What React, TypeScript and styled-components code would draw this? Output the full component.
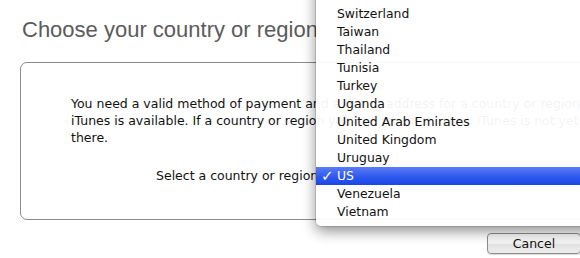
import React from "react";
import styled, { createGlobalStyle } from "styled-components";

const Global = createGlobalStyle`
  html, body { margin: 0; padding: 0; background: #fff; overflow: hidden; }
  body { width: 580px; height: 258px; }
`;

const Page = styled.div`
  position: relative;
  width: 700px;
  height: 258px;
  display: flex;
  flex-direction: column;
  padding: 0 0 0 20px;
  box-sizing: border-box;
  font-family: "DejaVu Sans", "Liberation Sans", sans-serif;
`;

const Title = styled.h1`
  margin: 0;
  height: 62px;
  display: flex;
  align-items: center;
  padding: 0 0 3px 2px;
  box-sizing: border-box;
  font-family: "Liberation Sans", Arial, sans-serif;
  font-weight: normal;
  font-size: 22px;
  color: #5b5b5b;
`;

const Box = styled.div`
  width: 660px;
  height: 158px;
  box-sizing: border-box;
  border: 1px solid #8a8a8a;
  border-radius: 7px;
  padding: 32px 0 0 50px;
  display: flex;
  flex-direction: column;
`;

const Message = styled.p`
  margin: 0;
  white-space: nowrap;
  font-size: 12.5px;
  line-height: 17px;
  color: #111;
`;

const SelectRow = styled.div`
  margin-top: 20px;
  padding-left: 85px;
  display: flex;
  align-items: center;
  gap: 6px;
  font-size: 12.5px;
  color: #111;
  height: 18px;
`;

const Footer = styled.div`
  display: flex;
  justify-content: flex-end;
  padding: 13px 0 0 0;
  width: 581px;
  margin-left: -20px;
`;

const Button = styled.button`
  width: 94px;
  height: 21px;
  border: 1px solid #8e8e8e;
  border-radius: 4px;
  background: linear-gradient(#fdfdfd, #f1f1f1 50%, #e2e2e2 51%, #ededed);
  box-shadow: 0 1px 1px rgba(0, 0, 0, 0.15);
  font-family: "DejaVu Sans", sans-serif;
  font-size: 12.5px;
  color: #111;
  padding: 0;
`;

const Menu = styled.ul`
  position: absolute;
  left: 316px;
  top: -31px;
  width: 300px;
  margin: 0;
  padding: 0 0 5px 0;
  list-style: none;
  background: rgba(255, 255, 255, 0.95);
  border-radius: 0 0 5px 5px;
  box-shadow: 0 5px 14px rgba(0, 0, 0, 0.45), 0 0 0 1px rgba(0, 0, 0, 0.12);
  font-family: "DejaVu Sans", sans-serif;
  font-size: 12.4px;
`;

const Item = styled.li<{ $selected?: boolean }>`
  height: 18px;
  line-height: 18px;
  padding-left: 21px;
  position: relative;
  color: ${(p) => (p.$selected ? "#fff" : "#111")};
  background: ${(p) =>
    p.$selected ? "linear-gradient(#5b7cf5, #2a56ee 60%, #1b46e6)" : "transparent"};
`;

const Check = styled.span`
  position: absolute;
  left: 5px;
  top: 0;
  font-size: 15px;
  font-weight: bold;
`;

const countries = [
  "Swaziland",
  "Sweden",
  "Switzerland",
  "Taiwan",
  "Thailand",
  "Tunisia",
  "Turkey",
  "Uganda",
  "United Arab Emirates",
  "United Kingdom",
  "Uruguay",
  "US",
  "Venezuela",
  "Vietnam",
];

export default function App() {
  return (
    <>
      <Global />
      <Page>
        <Title>Choose your country or region</Title>
        <Box>
          <Message>
            You need a valid method of payment and a billing address for a country or region where
            <br />
            iTunes is available. If a country or region you live in is not listed, iTunes is not yet
            available
            <br />
            there.
          </Message>
          <SelectRow>
            <span>Select a country or region:</span>
            <span>US</span>
          </SelectRow>
        </Box>
        <Footer>
          <Button>Cancel</Button>
        </Footer>
        <Menu>
          {countries.map((c) => (
            <Item key={c} $selected={c === "US"}>
              {c === "US" && <Check>✓</Check>}
              {c}
            </Item>
          ))}
        </Menu>
      </Page>
    </>
  );
}
